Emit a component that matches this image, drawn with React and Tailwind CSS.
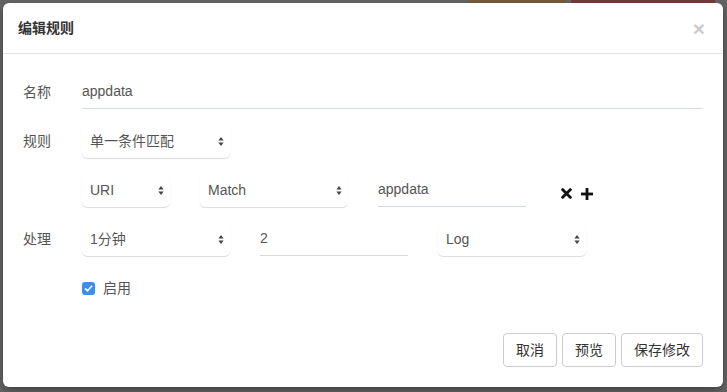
import React from "react";

const FONT = { fontFamily: '"Liberation Sans", "Noto Sans CJK SC", Arial, sans-serif' };

function Arrows() {
  return (
    <svg width="6" height="11" viewBox="0 0 6 11" className="shrink-0">
      <path d="M3 1 L5.6 4.6 L0.4 4.6 Z" fill="#444" />
      <path d="M3 10 L5.6 6.4 L0.4 6.4 Z" fill="#444" />
    </svg>
  );
}

function Select({ value, w = "w-[148px]" }) {
  return (
    <div
      className={`flex items-center justify-between h-[34px] ${w} pl-[8px] pr-[6px] rounded-[5px] bg-white shadow-[0_1px_1px_rgba(0,0,0,0.14),0_0_1px_rgba(0,0,0,0.04)] text-[14px] text-[#555]`}
    >
      <span>{value}</span>
      <Arrows />
    </div>
  );
}

function Input({ value, w }) {
  return (
    <div className={`flex items-center h-[34px] ${w} border-b border-[#d3dae3] text-[14px] text-[#555]`}>
      {value}
    </div>
  );
}

function Row({ label, children }) {
  return (
    <div className="flex items-center h-[34px]">
      <div className="w-[59px] shrink-0 text-[14px] text-[#555]">{label}</div>
      <div className="flex items-center flex-1 gap-[30px]">{children}</div>
    </div>
  );
}

function Button({ children }) {
  return (
    <div className="h-[34px] px-[12px] flex items-center border border-[#ccc] rounded-[4px] bg-white text-[14px] text-[#333]">
      {children}
    </div>
  );
}

export default function App() {
  return (
    <div className="w-[727px] h-[392px] bg-[#666] overflow-hidden flex flex-col" style={FONT}>
      <div className="h-[3px] flex shrink-0">
        <div className="w-[469px]" />
        <div className="w-[97px] bg-[#7c5d3c]" />
        <div className="w-[5px]" />
        <div className="w-[144px] bg-[#7a3b3b]" />
      </div>
      <div className="flex">
        <div className="w-[3px]" />
        <div className="w-[720px] h-[384px] bg-white rounded-[6px] flex flex-col shadow-[0_3px_9px_rgba(0,0,0,0.4)]">
          <div className="h-[51px] px-[15px] flex items-center justify-between border-b border-[#e5e5e5] shrink-0">
            <span className="text-[14px] font-semibold text-[#333]">编辑规则</span>
            <span className="text-[21px] font-bold text-[#000] opacity-20 leading-none mr-[3px]">×</span>
          </div>
          <div className="px-[20px] pt-[21px] flex flex-col gap-[15px]">
            <Row label="名称">
              <Input value="appdata" w="flex-1" />
            </Row>
            <Row label="规则">
              <Select value="单一条件匹配" />
            </Row>
            <Row label="">
              <Select value="URI" w="w-[88px]" />
              <Select value="Match" />
              <Input value="appdata" w="w-[148px]" />
              <div className="flex items-center gap-[9px] ml-[5px] mt-[7px]">
                <svg width="11" height="11" viewBox="0 0 11 11">
                  <path d="M1.8 1.8 L9.2 9.2 M9.2 1.8 L1.8 9.2" stroke="#111" strokeWidth="2.8" strokeLinecap="square" />
                </svg>
                <svg width="12" height="12" viewBox="0 0 12 12">
                  <rect x="4.6" y="0" width="2.8" height="12" fill="#111" />
                  <rect x="0" y="4.6" width="12" height="2.8" fill="#111" />
                </svg>
              </div>
            </Row>
            <Row label="处理">
              <Select value="1分钟" />
              <Input value="2" w="w-[148px]" />
              <Select value="Log" />
            </Row>
            <Row label="">
              <div className="flex items-center gap-[8px]">
                <div className="w-[13px] h-[13px] rounded-[3px] bg-[#3a8ef0] flex items-center justify-center">
                  <svg width="9" height="9" viewBox="0 0 9 9">
                    <path d="M1.5 4.8 L3.6 6.8 L7.6 2.2" stroke="#fff" strokeWidth="1.7" fill="none" strokeLinecap="round" strokeLinejoin="round" />
                  </svg>
                </div>
                <span className="text-[14px] text-[#555]">启用</span>
              </div>
            </Row>
          </div>
          <div className="mt-auto pr-[20px] pb-[20px] flex justify-end gap-[5px]">
            <Button>取消</Button>
            <Button>预览</Button>
            <Button>保存修改</Button>
          </div>
        </div>
      </div>
    </div>
  );
}
